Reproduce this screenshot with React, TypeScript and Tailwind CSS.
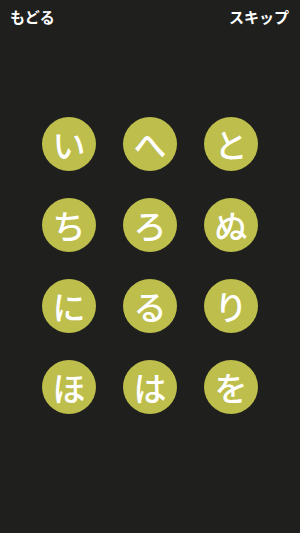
const kana = ['い', 'へ', 'と', 'ち', 'ろ', 'ぬ', 'に', 'る', 'り', 'ほ', 'は', 'を'];

export default function App() {
  return (
    <div
      className="w-[300px] h-[533px] bg-[#1f201e] text-white flex flex-col"
      style={{ fontFamily: '"Noto Sans CJK JP", "Noto Sans", sans-serif' }}
    >
      {/* header */}
      <div className="flex items-center justify-between pl-[10px] pr-[11px] h-[34px]">
        <span className="text-[15px] font-bold">もどる</span>
        <span className="text-[15px] font-bold">スキップ</span>
      </div>

      {/* kana grid */}
      <div className="grid grid-cols-3 gap-x-[27px] gap-y-[27px] w-[216px] ml-[42px] mt-[83px]">
        {kana.map((k) => (
          <div
            key={k}
            className="w-[54px] h-[54px] rounded-full bg-[#bdbe4b] flex items-center justify-center text-[33px] font-medium leading-none"
          >
            {k}
          </div>
        ))}
      </div>
    </div>
  );
}
